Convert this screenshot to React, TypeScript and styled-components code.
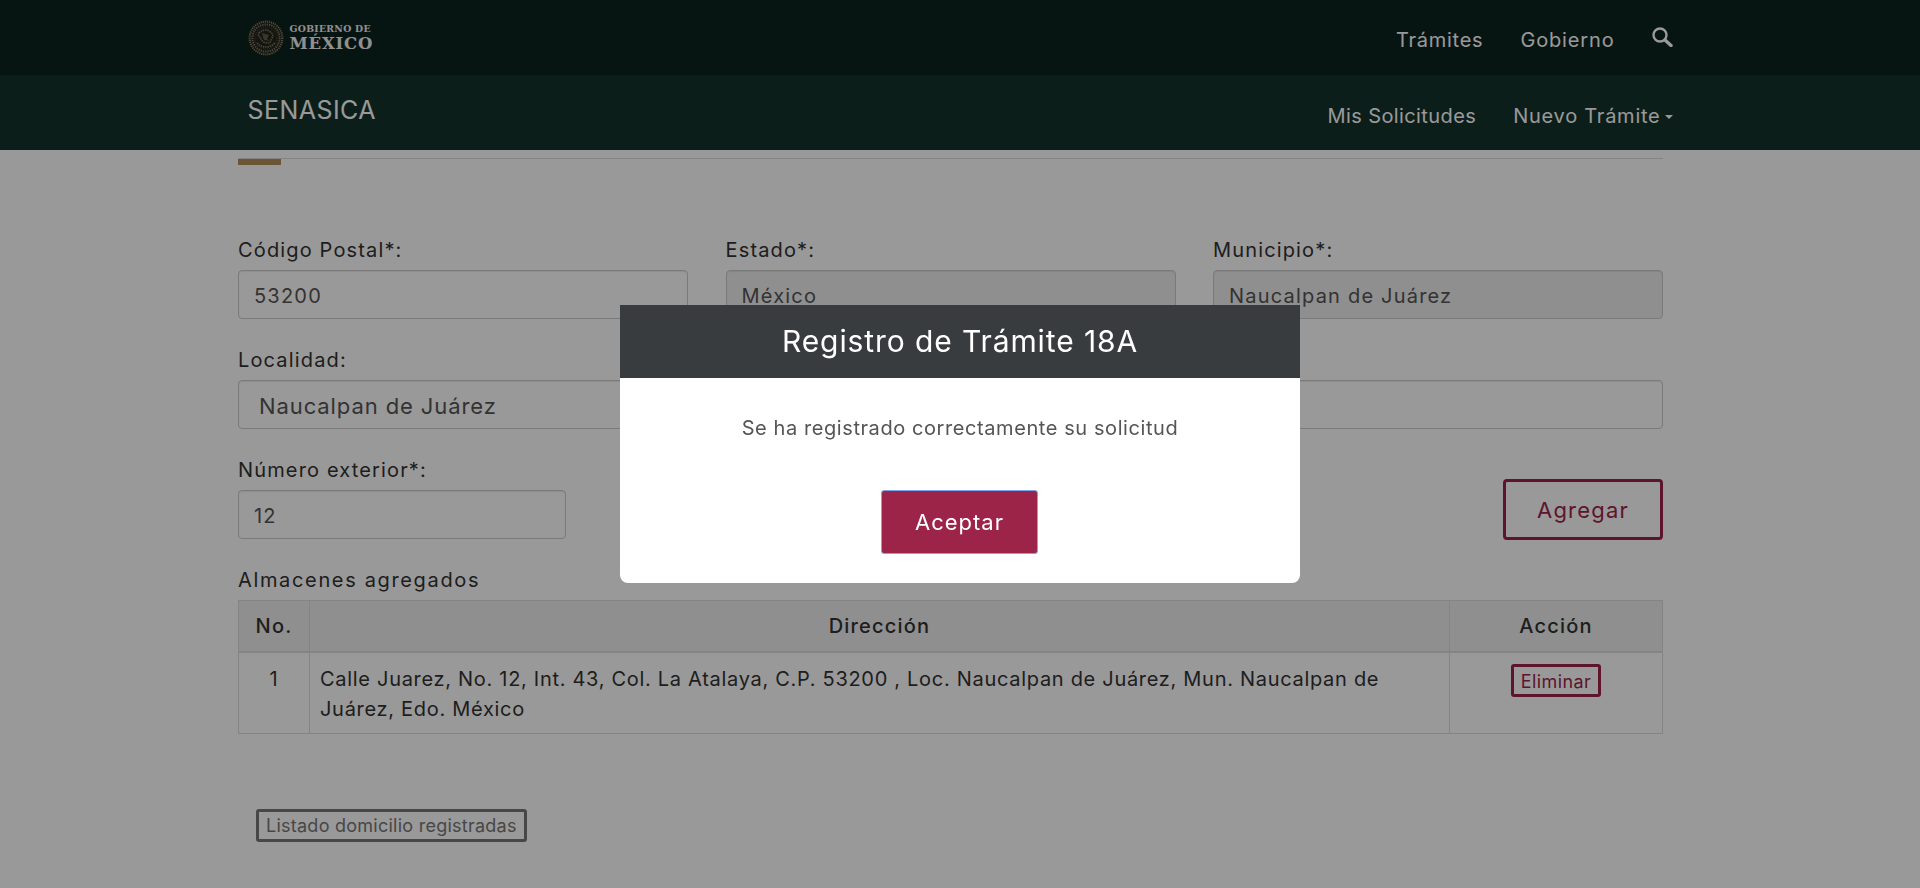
import styled, { createGlobalStyle } from "styled-components";

const GlobalStyle = createGlobalStyle`
  html, body {
    margin: 0;
    height: 100%;
    overflow: hidden;
    background: #fff;
  }
  body {
    font-family: Inter, "Open Sans", sans-serif;
    color: #333;
  }
  * {
    box-sizing: border-box;
  }
`;

const TopBar = styled.div`
  height: 75px;
  background: #0c231e;
`;

const SubBar = styled.div`
  height: 75px;
  background: #13322b;
`;

const NavInner = styled.div`
  width: 1425px;
  height: 100%;
  margin: 0 auto;
  display: flex;
  justify-content: space-between;
  align-items: center;
`;

const Brand = styled.div`
  display: flex;
  align-items: center;
  gap: 6px;
`;

const BrandText = styled.div`
  display: flex;
  flex-direction: column;
  font-family: "DejaVu Serif", serif;
  font-weight: 700;
  color: #f0f0f0;
  width: 82px;
`;

const BrandSmall = styled.span`
  font-size: 9.3px;
  line-height: 12px;
  letter-spacing: 0.3px;
  white-space: nowrap;
`;

const BrandBig = styled.span`
  font-size: 16.5px;
  line-height: 17px;
  letter-spacing: 0.8px;
  white-space: nowrap;
`;

const NavLinks = styled.nav<{ $top?: boolean }>`
  display: flex;
  align-items: center;
  gap: 37px;
  padding-top: ${(p) => (p.$top ? "5px" : "6px")};
`;

const NavLink = styled.a<{ $spacing: number }>`
  font-size: 20px;
  letter-spacing: ${(p) => p.$spacing}px;
  color: #fff;
  white-space: nowrap;
  display: inline-flex;
  align-items: center;
`;

const SearchIcon = styled.svg`
  width: 21px;
  height: 20px;
  margin-top: -6px;
`;

const Caret = styled.span`
  width: 0;
  height: 0;
  margin-left: 4px;
  margin-top: 3px;
  border-top: 4px solid #fff;
  border-left: 4px solid transparent;
  border-right: 4px solid transparent;
`;

const AppTitle = styled.div`
  font-size: 25px;
  letter-spacing: 0.45px;
  color: #fff;
  margin-top: -5px;
`;

const Main = styled.main`
  padding: 8px 19px 0 0;
`;

const Content = styled.div`
  width: 1425px;
  margin: 0 auto;
`;

const Rule = styled.div`
  height: 1px;
  background: #ddd;
`;

const GoldBar = styled.div`
  width: 43px;
  height: 6px;
  background: #b38e5d;
  margin-bottom: 71px;
`;

const FormRow = styled.div<{ $end?: boolean }>`
  display: flex;
  gap: 37.5px;
  margin-bottom: 27px;
  justify-content: ${(p) => (p.$end ? "space-between" : "flex-start")};
  align-items: flex-end;
`;

const Field = styled.div<{ $width: number }>`
  width: ${(p) => p.$width}px;
  flex: none;
`;

const Label = styled.label`
  display: block;
  font-size: 20px;
  letter-spacing: 1.15px;
  line-height: 28px;
  margin-bottom: 6px;
  color: #333;
`;

const Input = styled.div<{ $disabled?: boolean; $indent?: boolean }>`
  height: 49px;
  display: flex;
  align-items: center;
  padding: 2px 0 0 ${(p) => (p.$indent ? "20px" : "15px")};
  font-size: ${(p) => (p.$indent ? "22px" : "20px")};
  letter-spacing: ${(p) => (p.$indent ? "0.9px" : "1.2px")};
  color: #555;
  background: ${(p) => (p.$disabled ? "#eee" : "#fff")};
  border: 1px solid #ccc;
  border-radius: 4px;
  box-shadow: inset 0 1px 1px rgba(0, 0, 0, 0.075);
`;

const AddButton = styled.button`
  width: 160px;
  height: 61px;
  margin-bottom: -1px;
  font: inherit;
  font-size: 22px;
  letter-spacing: 1.2px;
  color: #9d2449;
  background: transparent;
  border: 3px solid #9d2449;
  border-radius: 4px;
`;

const SectionTitle = styled.div`
  font-size: 20px;
  letter-spacing: 1.65px;
  line-height: 28px;
  margin-bottom: 6px;
`;

const Table = styled.table`
  width: 100%;
  border-collapse: collapse;
  table-layout: fixed;
`;

const Th = styled.th<{ $width?: number }>`
  width: ${(p) => (p.$width ? `${p.$width}px` : "auto")};
  height: 51px;
  padding: 0;
  font-size: 20px;
  font-weight: 500;
  letter-spacing: 1.2px;
  color: #333;
  text-align: center;
  background: #eee;
  border: 1px solid #ddd;
  border-bottom-width: 2px;
`;

const Td = styled.td<{ $center?: boolean }>`
  height: 82px;
  padding: 11px 10px 9px;
  font-size: 20px;
  letter-spacing: 0.7px;
  line-height: 30px;
  color: #333;
  vertical-align: top;
  text-align: ${(p) => (p.$center ? "center" : "left")};
  border: 1px solid #ddd;
`;

const Address = styled.div`
  max-width: 1090px;
`;

const SmallButton = styled.button<{ $color: string; $spacing: number }>`
  display: inline-block;
  height: 33px;
  padding: 0 7px;
  font: inherit;
  font-size: 18px;
  letter-spacing: ${(p) => p.$spacing}px;
  color: ${(p) => p.$color};
  background: transparent;
  border: 3px solid ${(p) => p.$color};
  border-radius: 3px;
  white-space: nowrap;
`;

const ListWrap = styled.div`
  margin: 75px 0 0 18px;
`;

const Backdrop = styled.div`
  position: fixed;
  inset: 0;
  display: flex;
  align-items: center;
  justify-content: center;
  background: rgba(0, 0, 0, 0.4);
`;

const Modal = styled.div`
  width: 680px;
  height: 278px;
  background: #fff;
  border-radius: 0 0 8px 8px;
  overflow: hidden;
`;

const ModalHeader = styled.div`
  height: 73px;
  padding-bottom: 2px;
  display: flex;
  align-items: center;
  justify-content: center;
  background: #393c3f;
  color: #fff;
  font-size: 30px;
  letter-spacing: 0.9px;
`;

const ModalBody = styled.div`
  display: flex;
  flex-direction: column;
  align-items: center;
  padding-top: 36px;
`;

const ModalText = styled.p`
  margin: 0 0 48px;
  font-size: 20px;
  letter-spacing: 0.58px;
  line-height: 28px;
  color: #555;
`;

const AcceptButton = styled.button`
  width: 157px;
  height: 64px;
  margin-right: 1px;
  font: inherit;
  font-size: 22px;
  letter-spacing: 1px;
  color: #fff;
  background: #9d2449;
  border: 1px solid #7ea6ef;
  border-radius: 3px;
`;

const Emblem = () => (
  <svg width="36" height="36" viewBox="0 0 36 36">
    <circle cx="18" cy="18" r="17.4" fill="#20231b" />
    <circle cx="18" cy="18" r="16.4" fill="none" stroke="#8d8468" strokeWidth="2" strokeDasharray="1.1 1" />
    <circle cx="18" cy="18" r="13.6" fill="none" stroke="#77705a" strokeWidth="2" strokeDasharray="1.4 0.9" />
    <circle cx="18" cy="18" r="11" fill="none" stroke="#4d4b3c" strokeWidth="1.4" strokeDasharray="0.8 1.4" />
    <path
      d="M9 23c3 3 6 4 9 4s6-1 9-4M11 13c3-3 7-4 10-2s5 4 3 7-1 5-4 5-6-1-7-4-4-3-2-6z"
      fill="none"
      stroke="#77705a"
      strokeWidth="1.7"
      strokeDasharray="1.500 0.8"
    />
    <path d="M14 13l7 2-2 4 3 2-6-1-1-3z" fill="#5f5b48" />
  </svg>
);

const App = () => {
  return (
    <>
      <GlobalStyle />
      <TopBar>
        <NavInner>
          <Brand>
            <Emblem />
            <BrandText>
              <BrandSmall>GOBIERNO DE</BrandSmall>
              <BrandBig>MÉXICO</BrandBig>
            </BrandText>
          </Brand>
          <NavLinks $top>
            <NavLink $spacing={0.75}>Trámites</NavLink>
            <NavLink $spacing={0.85}>Gobierno</NavLink>
            <SearchIcon viewBox="0 0 21 20">
              <circle cx="8" cy="8" r="6.500" fill="none" stroke="#fff" strokeWidth="2.400" />
              <path d="M13 13l6 5.500" stroke="#fff" strokeWidth="3.400" strokeLinecap="round" />
            </SearchIcon>
          </NavLinks>
        </NavInner>
      </TopBar>
      <SubBar>
        <NavInner>
          <AppTitle>SENASICA</AppTitle>
          <NavLinks>
            <NavLink $spacing={0.4}>Mis Solicitudes</NavLink>
            <NavLink $spacing={0.75}>
              Nuevo Trámite
              <Caret />
            </NavLink>
          </NavLinks>
        </NavInner>
      </SubBar>
      <Main>
        <Content>
          <Rule />
          <GoldBar />
          <FormRow>
            <Field $width={450}>
              <Label>Código Postal*:</Label>
              <Input>53200</Input>
            </Field>
            <Field $width={450}>
              <Label>Estado*:</Label>
              <Input $disabled>México</Input>
            </Field>
            <Field $width={450}>
              <Label>Municipio*:</Label>
              <Input $disabled>Naucalpan de Juárez</Input>
            </Field>
          </FormRow>
          <FormRow>
            <Field $width={450}>
              <Label>Localidad:</Label>
              <Input $indent>Naucalpan de Juárez</Input>
            </Field>
            <Field $width={937.5}>
              <Label>Calle*:</Label>
              <Input>Calle Juarez</Input>
            </Field>
          </FormRow>
          <FormRow $end>
            <Field $width={328}>
              <Label>Número exterior*:</Label>
              <Input>12</Input>
            </Field>
            <AddButton>Agregar</AddButton>
          </FormRow>
          <SectionTitle>Almacenes agregados</SectionTitle>
          <Table>
            <thead>
              <tr>
                <Th $width={71}>No.</Th>
                <Th>Dirección</Th>
                <Th $width={213}>Acción</Th>
              </tr>
            </thead>
            <tbody>
              <tr>
                <Td $center>1</Td>
                <Td>
                  <Address>
                    Calle Juarez, No. 12, Int. 43, Col. La Atalaya, C.P. 53200 , Loc. Naucalpan de Juárez, Mun. Naucalpan de
                    Juárez, Edo. México
                  </Address>
                </Td>
                <Td $center>
                  <SmallButton $color="#9d2449" $spacing={0.4}>Eliminar</SmallButton>
                </Td>
              </tr>
            </tbody>
          </Table>
          <ListWrap>
            <SmallButton $color="#777" $spacing={0.25}>Listado domicilio registradas</SmallButton>
          </ListWrap>
        </Content>
      </Main>
      <Backdrop>
        <Modal>
          <ModalHeader>Registro de Trámite 18A</ModalHeader>
          <ModalBody>
            <ModalText>Se ha registrado correctamente su solicitud</ModalText>
            <AcceptButton>Aceptar</AcceptButton>
          </ModalBody>
        </Modal>
      </Backdrop>
    </>
  );
};

export default App;
